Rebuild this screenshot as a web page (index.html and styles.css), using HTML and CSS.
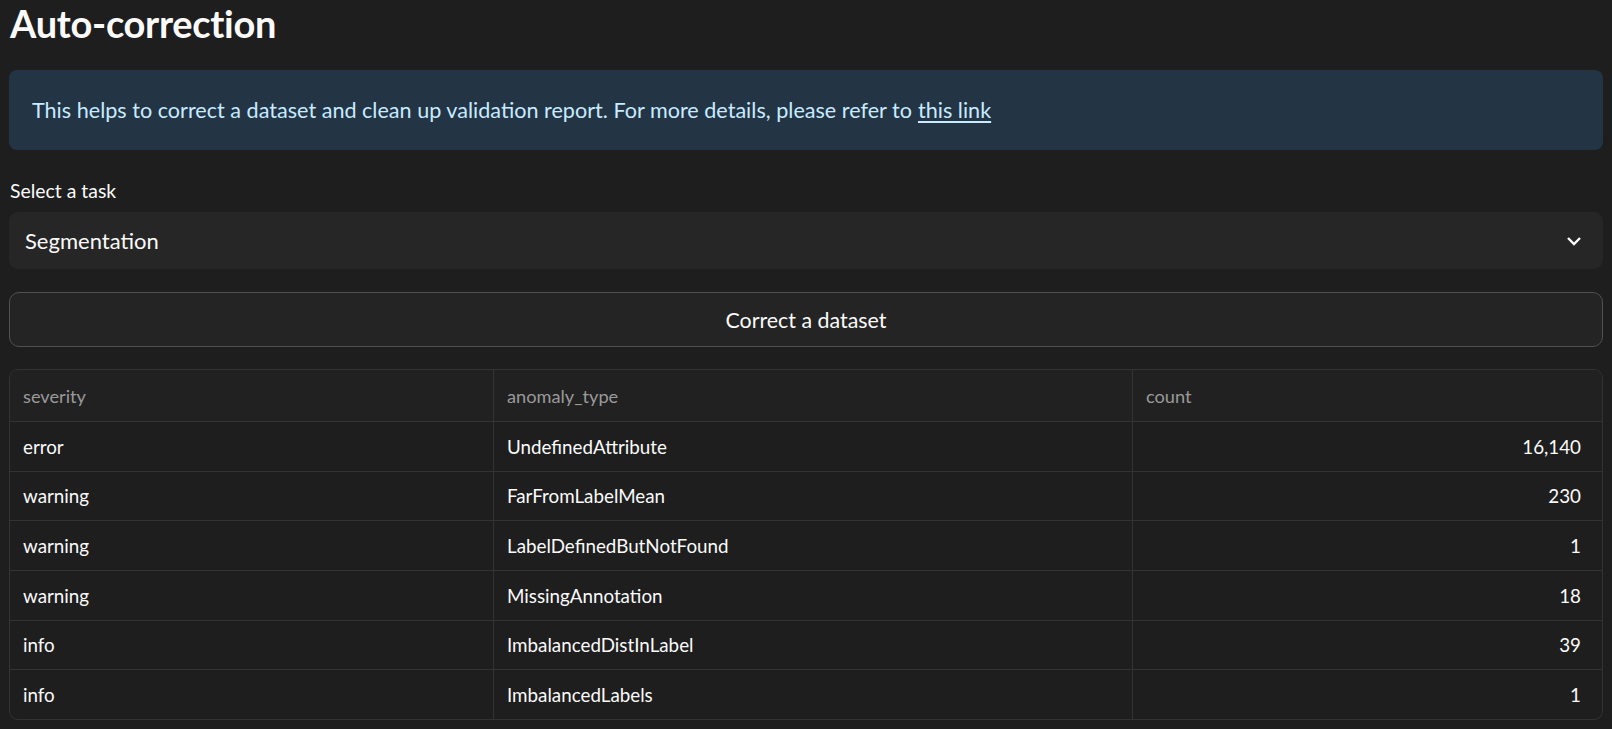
FILE: index.html
```html
<!DOCTYPE html>
<html>
<head>
<meta charset="utf-8">
<link rel="stylesheet" href="styles.css">
</head>
<body>
<main class="page">
  <h1 class="title">Auto-correction</h1>
  <div class="info">This helps to correct a dataset and clean up validation report. For more details, please refer to <a href="#" class="link">this link</a></div>
  <label class="label">Select a task</label>
  <div class="select">
    <span class="select-value">Segmentation</span>
    <svg class="chevron" width="16" height="10" viewBox="0 0 16 10"><path d="M2 2 L8 8 L14 2" fill="none" stroke="#fafafa" stroke-width="2.4"/></svg>
  </div>
  <button class="btn">Correct a dataset</button>
  <div class="table">
    <div class="row head">
      <div class="cell c1">severity</div>
      <div class="cell c2">anomaly_type</div>
      <div class="cell c3">count</div>
    </div>
    <div class="row">
      <div class="cell c1">error</div>
      <div class="cell c2">UndefinedAttribute</div>
      <div class="cell c3 num">16,140</div>
    </div>
    <div class="row">
      <div class="cell c1">warning</div>
      <div class="cell c2">FarFromLabelMean</div>
      <div class="cell c3 num">230</div>
    </div>
    <div class="row">
      <div class="cell c1">warning</div>
      <div class="cell c2">LabelDefinedButNotFound</div>
      <div class="cell c3 num">1</div>
    </div>
    <div class="row">
      <div class="cell c1">warning</div>
      <div class="cell c2">MissingAnnotation</div>
      <div class="cell c3 num">18</div>
    </div>
    <div class="row">
      <div class="cell c1">info</div>
      <div class="cell c2">ImbalancedDistInLabel</div>
      <div class="cell c3 num">39</div>
    </div>
    <div class="row last">
      <div class="cell c1">info</div>
      <div class="cell c2">ImbalancedLabels</div>
      <div class="cell c3 num">1</div>
    </div>
  </div>
</main>
</body>
</html>
```

FILE: styles.css
```css
html, body {
  margin: 0;
  padding: 0;
  background: #1e1e1e;
  color: #fafafa;
  font-family: "Lato", "Noto Sans", sans-serif;
}
.page {
  padding: 0 9px;
  display: flex;
  flex-direction: column;
}
.title {
  margin: 0;
  padding: 0 0 0 1px;
  font-size: 38px;
  font-weight: 700;
  line-height: 46px;
  height: 70px;
  letter-spacing: -0.3px;
}
.info {
  background: #233445;
  color: #c7ebff;
  border-radius: 8px;
  height: 80px;
  box-sizing: border-box;
  padding: 0 0 0 23px;
  display: flex;
  align-items: center;
  font-size: 21.6px;
}
.link {
  color: #c7ebff;
  text-decoration: underline;
  text-underline-offset: 3px;
  margin-left: 6px;
}
.label {
  margin-top: 29px;
  padding-left: 1px;
  font-size: 19.4px;
  line-height: 24px;
  height: 24px;
}
.select {
  margin-top: 9px;
  height: 57px;
  background: #262626;
  border-radius: 9px;
  display: flex;
  align-items: center;
  justify-content: space-between;
  padding: 0 21px 0 16px;
}
.select-value {
  font-size: 22px;
}
.chevron {
  display: block;
}
.btn {
  margin-top: 23px;
  height: 55px;
  background: #242424;
  border: 1px solid #505050;
  border-radius: 10px;
  color: #fafafa;
  font-family: inherit;
  font-size: 21.4px;
  padding: 0;
}
.table {
  margin-top: 22px;
  border: 1px solid #333333;
  border-radius: 9px;
  overflow: hidden;
  background: #1e1e1e;
}
.row {
  display: grid;
  grid-template-columns: 483px 639px 1fr;
  height: 49.67px;
  box-sizing: border-box;
  border-top: 1px solid #333333;
  font-size: 18.8px;
}
.row.head {
  border-top: none;
  height: 51px;
  color: #9a9a9a;
  background: #212121;
  font-size: 18.2px;
}
.cell {
  display: flex;
  align-items: center;
  padding: 0 13px;
  border-left: 1px solid #333333;
}
.cell.c1 {
  border-left: none;
}
.cell.num {
  justify-content: flex-end;
  padding-right: 21px;
}
```
